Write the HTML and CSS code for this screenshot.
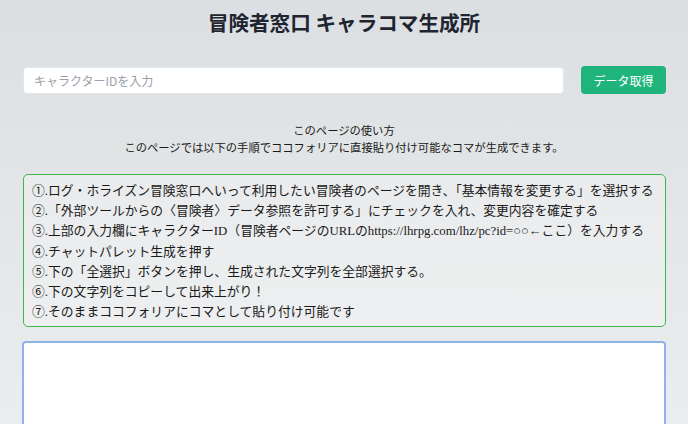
FILE: index.html
```html
<!DOCTYPE html>
<html lang="ja">
<head>
    <meta charset="UTF-8">
    <title>冒険者窓口 キャラコマ生成所</title>
    <meta name="viewport" content="width=device-width, initial-scale=1.0">
    <link rel="stylesheet" href="styles.css">
</head>
<body>

<main class="page">
    <h1 class="title">冒険者窓口 キャラコマ生成所</h1>

    <div class="search-row">
        <input type="text" class="char-input" placeholder="キャラクターIDを入力">
        <button class="fetch-btn">データ取得</button>
    </div>

    <div class="howto">
        <p>このページの使い方</p>
        <p>このページでは以下の手順でココフォリアに直接貼り付け可能なコマが生成できます。</p>
    </div>

    <div class="steps">
        <p>①.ログ・ホライズン冒険窓口へいって利用したい冒険者のページを開き、「基本情報を変更する」を選択する</p>
        <p>②.「外部ツールからの〈冒険者〉データ参照を許可する」にチェックを入れ、変更内容を確定する</p>
        <p>③.上部の入力欄にキャラクターID（冒険者ページのURLのhttps://lhrpg.com/lhz/pc?id=○○←ここ）を入力する</p>
        <p>④.チャットパレット生成を押す</p>
        <p>⑤.下の「全選択」ボタンを押し、生成された文字列を全部選択する。</p>
        <p>⑥.下の文字列をコピーして出来上がり！</p>
        <p>⑦.そのままココフォリアにコマとして貼り付け可能です</p>
    </div>

    <textarea class="output" readonly></textarea>
</main>

</body>
</html>
```

FILE: styles.css
```css
* {
    box-sizing: border-box;
    margin: 0;
    padding: 0;
}

html, body {
    min-height: 100vh;
    font-family: "Noto Sans CJK JP", "Noto Sans", sans-serif;
    color: #1f2933;
    background: linear-gradient(180deg, #dcdfe1 0%, #eceeef 100%);
}

.page {
    padding: 8px 22px 0 22px;
}

.title {
    text-align: center;
    font-size: 20.6px;
    line-height: 28px;
    font-weight: 700;
    color: #1e2530;
}

.search-row {
    display: flex;
    align-items: center;
    gap: 17px;
    margin-top: 30px;
    padding-left: 1px;
}

.char-input {
    flex: 1;
    height: 27px;
    padding: 0 10px;
    border: 1px solid #e3e6ea;
    border-radius: 4px;
    background: #fff;
    font-family: inherit;
    font-size: 12px;
}

.char-input::placeholder {
    color: #9aa1aa;
}

.fetch-btn {
    width: 85px;
    height: 28px;
    border: none;
    border-radius: 4px;
    background-color: #1fb47c;
    color: #fff;
    font-family: inherit;
    font-size: 12px;
    cursor: pointer;
}

.howto {
    margin-top: 28px;
    text-align: center;
    font-size: 11.3px;
    line-height: 17px;
    color: #1a1a1a;
}

.steps {
    margin: 18px 0 0 1px;
    padding: 6px 8px 4px 8px;
    border: 1.5px solid #3fb54d;
    border-radius: 5px;
    background-color: rgba(255, 255, 255, 0.25);
    font-family: "Liberation Serif", "Noto Sans CJK JP", serif;
    font-size: 12.8px;
    line-height: 20.2px;
    color: #1a1a1a;
}

.output {
    display: block;
    width: 100%;
    height: 120px;
    margin-top: 14px;
    border: 2px solid #8fb3e6;
    border-radius: 4px;
    background: #fff;
    resize: none;
}
```
